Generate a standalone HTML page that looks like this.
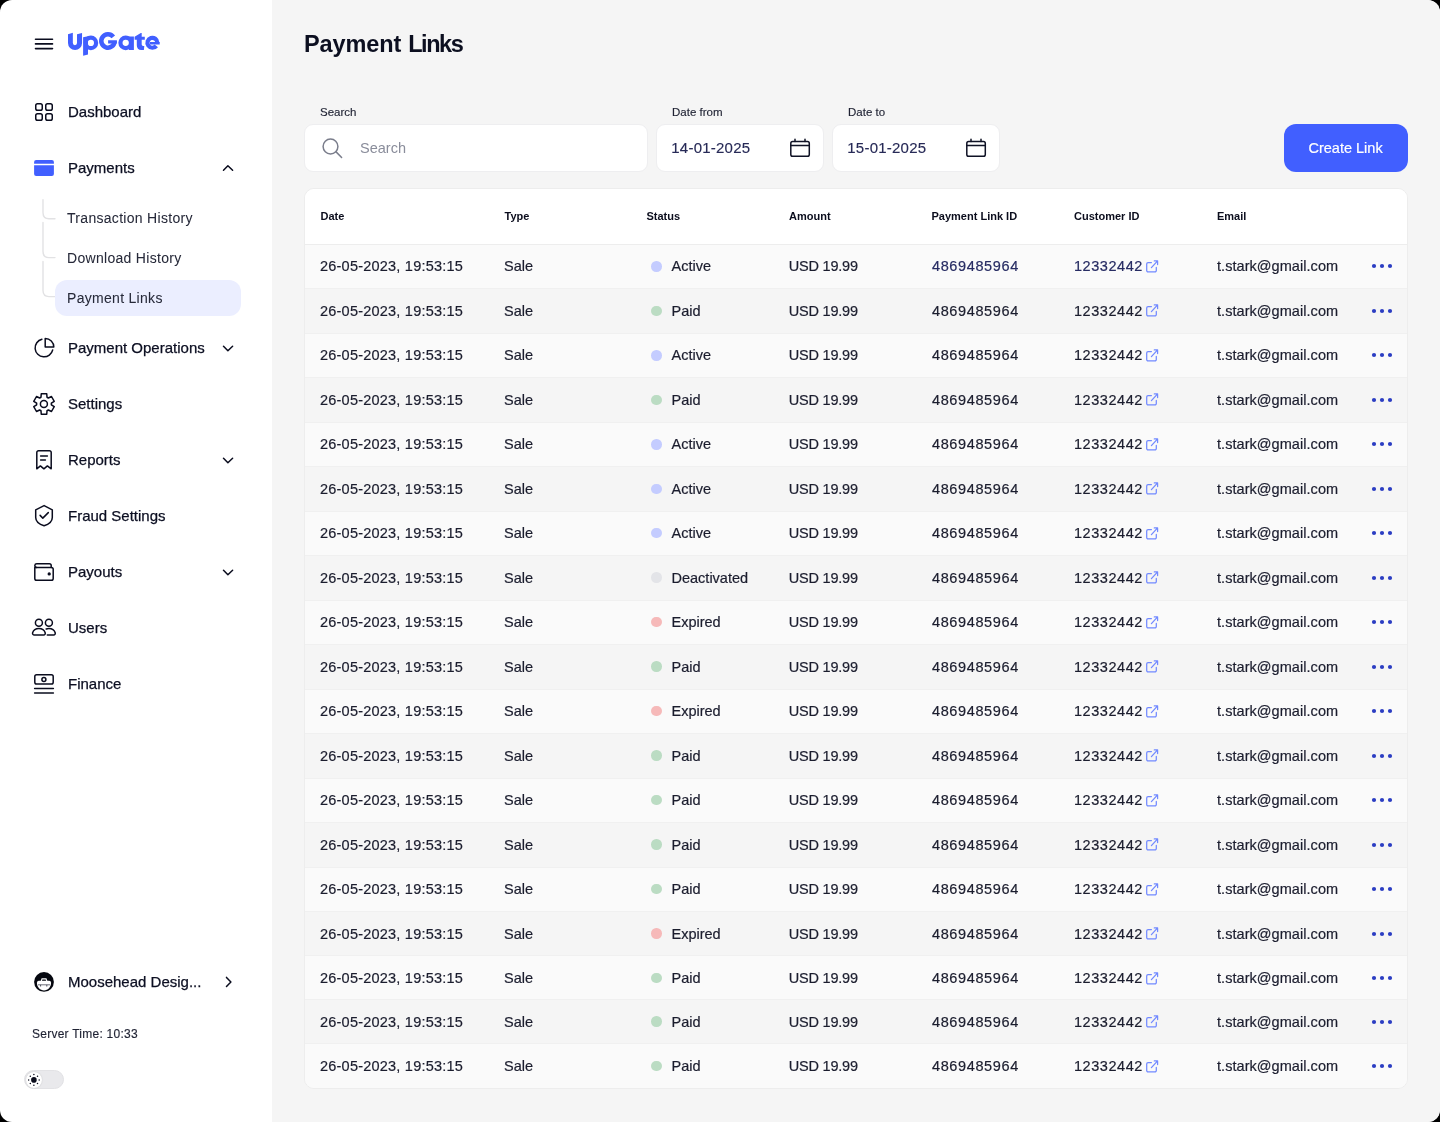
<!DOCTYPE html>
<html><head><meta charset="utf-8">
<style>
*{box-sizing:border-box;margin:0;padding:0}
html,body{width:1440px;height:1122px;overflow:hidden;background:#000;font-family:"Liberation Sans",sans-serif;color:#171a2c}
.app{position:absolute;left:0;top:0;width:1440px;height:1122px;border-radius:12px;overflow:hidden;background:#fff;will-change:transform}
.mainbg{position:absolute;left:272px;top:0;width:1168px;height:1122px;background:#f5f5f5;border-radius:0 12px 12px 0}
.t{position:absolute;white-space:nowrap;line-height:1}
.nav{font-size:15px;color:#0c0f22;-webkit-text-stroke:0.25px #0c0f22}
.sub{font-size:14px;color:#262939;letter-spacing:0.3px;-webkit-text-stroke:0.05px #262939}
.ico{position:absolute;overflow:visible}
.lbl{position:absolute;font-size:11.5px;color:#1f2233;-webkit-text-stroke:0.15px #1f2233;line-height:1;white-space:nowrap}
.inp{position:absolute;background:#fff;border-radius:9px;height:48px;top:124px;border:1px solid #eeeef0}
.btn{position:absolute;left:1284px;top:124px;width:124px;height:48px;border-radius:12px;background:#415fff}
.card{position:absolute;left:304px;top:188px;width:1104px;height:901px;border-radius:10px;background:#fafafa;overflow:hidden;border:1px solid #ededed}
.head{position:absolute;left:0;top:0;width:1102px;height:56px;background:#fff;border-bottom:1px solid #ededed}
.head span{position:absolute;top:21.75px;font-size:11px;font-weight:bold;line-height:1;color:#0b0d1d;white-space:nowrap}
.row{position:absolute;left:0;width:1102px;height:44px;font-size:14.5px;line-height:1;color:#1b1d2e;border-bottom:1px solid #f0f0f0;-webkit-text-stroke:0.2px #1b1d2e}
.row.odd{background:#fafafa}
.row.even{background:#f5f5f5}
.row.h45 span{top:14.8px}
.row.h45 .dot{top:16.7px}
.row.h45 .ext{top:11.5px}
.row.h45 .dots{top:18.8px}
.row span{position:absolute;top:14.4px;white-space:nowrap}
.c1{left:15px;letter-spacing:0.22px}
.c2{left:199px}
.c3{left:366.5px;letter-spacing:0px}
.dot{position:absolute;left:346.2px;top:16.2px;width:10.5px;height:10.5px;border-radius:50%}
.c4{left:483.7px;letter-spacing:-0.2px}
.c5{left:627px;letter-spacing:0.62px}
.c6{left:769px;letter-spacing:0.55px}
.c7{left:912px;letter-spacing:0.05px}
.ext{position:absolute;left:837px;top:11px}
.dots{position:absolute;left:1064px;top:18.3px}
.row.first .c5,.row.first .c6{color:#272c63;-webkit-text-stroke:0.2px #272c63}
</style></head>
<body><div class="app">
<div class="mainbg"></div>
<!-- SIDEBAR -->
<svg class="ico" style="left:0;top:0" width="272" height="1122" viewBox="0 0 272 1122">
 <g fill="none" stroke="#0a0c1e" stroke-width="1.5" stroke-linecap="round" stroke-linejoin="round">
  <!-- hamburger -->
  <path d="M35.5 39.2H52.5M35.5 43.9H52.5M35.5 48.6H52.5" stroke-width="1.6"/>
  <!-- dashboard -->
  <rect x="35.75" y="103.75" width="6.5" height="6.5" rx="1.8"/>
  <rect x="45.75" y="103.75" width="6.5" height="6.5" rx="1.8"/>
  <rect x="35.75" y="113.75" width="6.5" height="6.5" rx="1.8"/>
  <rect x="45.75" y="113.75" width="6.5" height="6.5" rx="1.8"/>
  <!-- chevrons -->
  <path d="M223.5 170.3L227.9 165.8L232.6 170.3"/>
  <path d="M223.5 346.3L227.9 350.8L232.6 346.3"/>
  <path d="M223.5 458.3L227.9 462.8L232.6 458.3"/>
  <path d="M223.5 570.3L227.9 574.8L232.6 570.3"/>
  <path d="M226.5 977.4L230.9 982L226.5 986.5"/>
  <!-- tree lines -->
  <g stroke="#e2e2e4" stroke-width="1.4">
   <path d="M43 199.6V212.7Q43 218.7 49 218.7H55"/>
   <path d="M43 222.5V251.6Q43 257.6 49 257.6H55"/>
   <path d="M43 261.5V290.6Q43 296.6 49 296.6H55"/>
  </g>
  <!-- payment operations: pie -->
  <g transform="translate(28 331)">
   <path d="M13.9 8.3A8.9 8.9 0 1 0 24.7 18.9"/>
   <path d="M17.2 16.1V7.4A8.6 8.6 0 0 1 25.8 16.1Z"/>
  </g>
  <!-- settings gear -->
  <g transform="translate(28 387)">
   <path d="M12.99 10.24 L13.26 6.76 L18.74 6.76 L19.01 10.24 L20.35 11.01 L23.50 9.50 L26.24 14.26 L23.36 16.23 L23.36 17.77 L26.24 19.74 L23.50 24.50 L20.35 22.99 L19.01 23.76 L18.74 27.24 L13.26 27.24 L12.99 23.76 L11.65 22.99 L8.50 24.50 L5.76 19.74 L8.64 17.77 L8.64 16.23 L5.76 14.26 L8.50 9.50 L11.65 11.01Z"/>
   <circle cx="15.9" cy="16.9" r="3.5"/>
  </g>
  <!-- reports receipt -->
  <g transform="translate(28 443)">
   <path d="M8.8 25.8V9.4A1.7 1.7 0 0 1 10.5 7.7H21.5A1.7 1.7 0 0 1 23.2 9.4V25.8L19.4 22.9L15.9 25.8L12.4 22.9Z"/>
   <path d="M12.6 12.9H19.4M12.6 17H17.4"/>
  </g>
  <!-- fraud shield -->
  <g transform="translate(28 499)">
   <path d="M16.1 6.6L7.7 10.8V18.5C7.7 22.2 11.2 25.2 16.1 26.8C21 25.2 24.3 22.2 24.3 18.5V10.8Z"/>
   <path d="M12.1 16.4L14.8 19.1L20.3 13.6"/>
  </g>
  <!-- payouts wallet -->
  <g transform="translate(28 555)">
   <path d="M6.8 12.4V23.4A1.8 1.8 0 0 0 8.6 25.2H23.4A1.8 1.8 0 0 0 25.2 23.4V14.2A1.8 1.8 0 0 0 23.4 12.4H6.8"/>
   <path d="M23.2 12.4V10.6A1.8 1.8 0 0 0 21.4 8.8H8.8A2 2 0 0 0 6.8 10.6A1.8 1.8 0 0 0 8.6 12.4"/>
   <circle cx="21.2" cy="18.9" r="0.9" fill="#0a0c1e"/>
  </g>
  <!-- users -->
  <g transform="translate(28 611)">
   <circle cx="10.9" cy="11.7" r="3.5"/>
   <circle cx="20.9" cy="11.7" r="3.5"/>
   <path d="M6.3 24.1H15.6C16.8 24.1 17.5 23 17.2 21.8C16.4 19.3 13.9 17.6 10.9 17.6C7.9 17.6 5.4 19.3 4.6 21.8C4.3 23 5.1 24.1 6.3 24.1Z"/>
   <path d="M18.2 18.0C19 17.7 19.9 17.6 20.9 17.6C23.9 17.6 26.4 19.3 27.2 21.8C27.5 23 26.8 24.1 25.6 24.1H19.3"/>
  </g>
  <!-- finance -->
  <g transform="translate(28 667)">
   <rect x="6.8" y="7.7" width="18.4" height="9.4" rx="1.8"/>
   <circle cx="15.9" cy="12.4" r="2"/>
   <path d="M6.6 21.5H25.4M6.6 25.9H25.4"/>
  </g>
 </g>
 <!-- payments card icon (filled) -->
 <g fill="#415fff">
  <path d="M34.1 163.8V162A2 2 0 0 1 36.1 160H51.9A2 2 0 0 1 53.9 162V163.8Z"/>
  <path d="M34.1 165.2H53.9V173.9A2 2 0 0 1 51.9 175.9H36.1A2 2 0 0 1 34.1 173.9Z"/>
 </g>
 <!-- avatar -->
 <g transform="translate(28 965)">
  <circle cx="16" cy="16.9" r="9.9" fill="#05070f"/>
  <path d="M8.9 17.5H23.1C23.1 22.2 19.9 25.4 16 25.4C12.1 25.4 8.9 22.2 8.9 17.5Z" fill="#fff"/>
  <rect x="9" y="15.8" width="14" height="3.5" rx="1.7" fill="#fff"/>
  <path d="M12.7 15.9L13.6 13.3H18.4L19.4 15.9H18.2L17.6 14.4H14.4L13.9 15.9Z" fill="#fff"/>
  <path d="M10 19.8H22" stroke="#4a4c5a" stroke-width="0.8"/>
  <path d="M12.6 19.8V21.5M18.8 19.8V21.5" stroke="#4a4c5a" stroke-width="1"/>
 </g>
</svg>

<svg class="ico" style="left:0;top:0" width="200" height="70" viewBox="0 0 200 70">
 <g fill="#415fff">
  <path d="M68 34.25L72.85 32.7V43.1A2.075 2.075 0 0 0 77 43.1V34.25L82.05 32.9V43.02A7.025 7.025 0 0 1 68 43.02Z"/>
  <path d="M83.1 37.2L88 36.2V54.4L83.1 55.8Z"/>
  <path d="M129 36.4H133.9V49.9H129Z"/>
  <path d="M134.6 39.8V36.7L140.8 32.9H141.7V36.7H144.8V39.8H141.7V44.6Q141.7 46.05 143.1 46.05H144.3L143.9 49.9H141.3Q136.8 49.9 136.8 45.2V39.8Z"/>
  <path d="M108.1 40.15H116.9V43.6H108.1Z"/>
  <path d="M149.9 42.1H159.7V44.5H149.9Z"/>
 </g>
 <g fill="none" stroke="#415fff">
  <circle cx="90.9" cy="42.9" r="5.2" stroke-width="4.2"/>
  <circle cx="125.7" cy="42.85" r="5.25" stroke-width="4.2"/>
  <path d="M113.28 36.83A6.7 6.7 0 1 0 114.70 41.18" stroke-width="4.5"/>
  <path d="M157.35 42.80A4.95 4.95 0 1 0 156.31 45.85" stroke-width="4.2"/>
 </g>
</svg>

<div class="t nav" style="left:68px;top:104px">Dashboard</div>
<div class="t nav" style="left:68px;top:160px">Payments</div>
<div class="t sub" style="left:67px;top:211px">Transaction History</div>
<div class="t sub" style="left:67px;top:251px">Download History</div>
<div style="position:absolute;left:55px;top:280px;width:186px;height:36px;border-radius:12px;background:#ebeeff"></div>
<div class="t sub" style="left:67px;top:291px">Payment Links</div>
<div class="t nav" style="left:68px;top:340px">Payment Operations</div>
<div class="t nav" style="left:68px;top:396px">Settings</div>
<div class="t nav" style="left:68px;top:452px">Reports</div>
<div class="t nav" style="left:68px;top:508px">Fraud Settings</div>
<div class="t nav" style="left:68px;top:564px">Payouts</div>
<div class="t nav" style="left:68px;top:620px">Users</div>
<div class="t nav" style="left:68px;top:676px">Finance</div>

<div class="t nav" style="left:68px;top:974px">Moosehead Desig...</div>
<div class="t" style="left:32px;top:1028px;font-size:12px;color:#1f2233;letter-spacing:0.25px;-webkit-text-stroke:0.15px #1f2233">Server Time: 10:33</div>
<div style="position:absolute;left:24.3px;top:1070.3px;width:39.4px;height:19.2px;border-radius:10px;background:#e9e9ec;border:1px solid #e2e2e5"></div>
<div style="position:absolute;left:25.9px;top:1071.9px;width:16px;height:16px;border-radius:8px;background:#fff;box-shadow:0 0 1.5px rgba(0,0,0,.18)"></div>
<svg class="ico" style="left:0;top:0" width="100" height="1122" viewBox="0 0 100 1122">
 <g transform="translate(33.9 1079.9)" fill="#0b0d1c">
  <circle r="2.8"/>
  <circle cx="0" cy="-5.3" r="0.75"/><circle cx="0" cy="5.3" r="0.75"/>
  <circle cx="-5.3" cy="0" r="0.75"/><circle cx="5.3" cy="0" r="0.75"/>
  <circle cx="-3.6" cy="-3.6" r="0.75"/><circle cx="3.6" cy="-3.6" r="0.75"/>
  <circle cx="-3.6" cy="3.6" r="0.75"/><circle cx="3.6" cy="3.6" r="0.75"/>
 </g>
</svg>

<!-- MAIN -->
<div class="t" style="left:304px;top:33px;font-size:23.5px;font-weight:bold;color:#0c0f20;letter-spacing:-0.1px">Payment</div>
<div class="t" style="left:408.2px;top:33px;font-size:23.5px;font-weight:bold;color:#0c0f20;letter-spacing:-1.45px">Links</div>
<div class="lbl" style="left:320px;top:106.5px">Search</div>
<div class="lbl" style="left:672px;top:106.5px">Date from</div>
<div class="lbl" style="left:848px;top:106.5px">Date to</div>
<div class="inp" style="left:304px;width:344px"></div>
<div class="inp" style="left:656px;width:168px"></div>
<div class="inp" style="left:832px;width:168px"></div>
<svg class="ico" style="left:300px;top:120px" width="720" height="60" viewBox="300 120 720 60">
 <g fill="none" stroke="#7a7d8b" stroke-width="1.5" stroke-linecap="round">
  <circle cx="330.5" cy="146.5" r="7.4"/>
  <path d="M336.1 151.9L341.6 157.5"/>
 </g>
 <g fill="none" stroke="#0f1225" stroke-width="1.5" stroke-linecap="round" stroke-linejoin="round">
  <rect x="790.8" y="141.6" width="18.5" height="14.6" rx="1.8"/>
  <path d="M790.8 145.5H809.3M795 139.2V141.6M805 139.2V141.6"/>
  <rect x="966.8" y="141.6" width="18.5" height="14.6" rx="1.8"/>
  <path d="M966.8 145.5H985.3M971 139.2V141.6M981 139.2V141.6"/>
 </g>
</svg>
<div class="t" style="left:360px;top:141px;font-size:14.5px;color:#8a8d9b">Search</div>
<div class="t" style="left:671.3px;top:139.5px;font-size:15px;color:#272a57;letter-spacing:0.23px;-webkit-text-stroke:0.15px #272a57">14-01-2025</div>
<div class="t" style="left:847.3px;top:139.5px;font-size:15px;color:#272a57;letter-spacing:0.23px;-webkit-text-stroke:0.15px #272a57">15-01-2025</div>
<div class="btn"></div>
<div class="t" style="left:1308.5px;top:141px;font-size:14.5px;color:#fff;-webkit-text-stroke:0.2px #fff">Create Link</div>

<div class="card"><div class="head">
<span style="left:15.5px">Date</span><span style="left:199.5px">Type</span><span style="left:341.5px">Status</span><span style="left:484px">Amount</span><span style="left:626.5px">Payment Link ID</span><span style="left:769px">Customer ID</span><span style="left:912px">Email</span>
</div>
<div class="row odd first" style="top:56px;height:44px"><span class="c1" style="top:14.35px">26-05-2023, 19:53:15</span><span class="c2" style="top:14.35px">Sale</span><i class="dot" style="top:16.10px;background:#c4ccff"></i><span class="c3" style="top:14.35px">Active</span><span class="c4" style="top:14.35px">USD 19.99</span><span class="c5" style="top:14.35px">4869485964</span><span class="c6" style="top:14.35px">12332442</span><svg class="ext" style="top:11.00px" width="20" height="20" viewBox="0 0 20 20"><path d="M9.4 6.5H6.1A1.4 1.4 0 0 0 4.7 7.9V14.5A1.4 1.4 0 0 0 6.1 15.9H12.9A1.4 1.4 0 0 0 14.3 14.5V11.4M12.3 4.9H15.6V8.6M15.6 4.9L9.4 11.6" fill="none" stroke="#7189ff" stroke-width="1.25" stroke-linecap="round" stroke-linejoin="round"/></svg><span class="c7" style="top:14.35px">t.stark@gmail.com</span><svg class="dots" style="top:18.35px" width="26" height="6" viewBox="0 0 26 6"><circle cx="5" cy="3" r="2.1" fill="#2b3dc2"/><circle cx="13" cy="3" r="2.1" fill="#2b3dc2"/><circle cx="21" cy="3" r="2.1" fill="#2b3dc2"/></svg></div>
<div class="row even" style="top:100px;height:45px"><span class="c1" style="top:14.83px">26-05-2023, 19:53:15</span><span class="c2" style="top:14.83px">Sale</span><i class="dot" style="top:16.58px;background:#bbdcc3"></i><span class="c3" style="top:14.83px">Paid</span><span class="c4" style="top:14.83px">USD 19.99</span><span class="c5" style="top:14.83px">4869485964</span><span class="c6" style="top:14.83px">12332442</span><svg class="ext" style="top:11.48px" width="20" height="20" viewBox="0 0 20 20"><path d="M9.4 6.5H6.1A1.4 1.4 0 0 0 4.7 7.9V14.5A1.4 1.4 0 0 0 6.1 15.9H12.9A1.4 1.4 0 0 0 14.3 14.5V11.4M12.3 4.9H15.6V8.6M15.6 4.9L9.4 11.6" fill="none" stroke="#7189ff" stroke-width="1.25" stroke-linecap="round" stroke-linejoin="round"/></svg><span class="c7" style="top:14.83px">t.stark@gmail.com</span><svg class="dots" style="top:18.83px" width="26" height="6" viewBox="0 0 26 6"><circle cx="5" cy="3" r="2.1" fill="#2b3dc2"/><circle cx="13" cy="3" r="2.1" fill="#2b3dc2"/><circle cx="21" cy="3" r="2.1" fill="#2b3dc2"/></svg></div>
<div class="row odd" style="top:145px;height:44px"><span class="c1" style="top:14.31px">26-05-2023, 19:53:15</span><span class="c2" style="top:14.31px">Sale</span><i class="dot" style="top:16.06px;background:#c4ccff"></i><span class="c3" style="top:14.31px">Active</span><span class="c4" style="top:14.31px">USD 19.99</span><span class="c5" style="top:14.31px">4869485964</span><span class="c6" style="top:14.31px">12332442</span><svg class="ext" style="top:10.96px" width="20" height="20" viewBox="0 0 20 20"><path d="M9.4 6.5H6.1A1.4 1.4 0 0 0 4.7 7.9V14.5A1.4 1.4 0 0 0 6.1 15.9H12.9A1.4 1.4 0 0 0 14.3 14.5V11.4M12.3 4.9H15.6V8.6M15.6 4.9L9.4 11.6" fill="none" stroke="#7189ff" stroke-width="1.25" stroke-linecap="round" stroke-linejoin="round"/></svg><span class="c7" style="top:14.31px">t.stark@gmail.com</span><svg class="dots" style="top:18.31px" width="26" height="6" viewBox="0 0 26 6"><circle cx="5" cy="3" r="2.1" fill="#2b3dc2"/><circle cx="13" cy="3" r="2.1" fill="#2b3dc2"/><circle cx="21" cy="3" r="2.1" fill="#2b3dc2"/></svg></div>
<div class="row even" style="top:189px;height:45px"><span class="c1" style="top:14.79px">26-05-2023, 19:53:15</span><span class="c2" style="top:14.79px">Sale</span><i class="dot" style="top:16.54px;background:#bbdcc3"></i><span class="c3" style="top:14.79px">Paid</span><span class="c4" style="top:14.79px">USD 19.99</span><span class="c5" style="top:14.79px">4869485964</span><span class="c6" style="top:14.79px">12332442</span><svg class="ext" style="top:11.44px" width="20" height="20" viewBox="0 0 20 20"><path d="M9.4 6.5H6.1A1.4 1.4 0 0 0 4.7 7.9V14.5A1.4 1.4 0 0 0 6.1 15.9H12.9A1.4 1.4 0 0 0 14.3 14.5V11.4M12.3 4.9H15.6V8.6M15.6 4.9L9.4 11.6" fill="none" stroke="#7189ff" stroke-width="1.25" stroke-linecap="round" stroke-linejoin="round"/></svg><span class="c7" style="top:14.79px">t.stark@gmail.com</span><svg class="dots" style="top:18.79px" width="26" height="6" viewBox="0 0 26 6"><circle cx="5" cy="3" r="2.1" fill="#2b3dc2"/><circle cx="13" cy="3" r="2.1" fill="#2b3dc2"/><circle cx="21" cy="3" r="2.1" fill="#2b3dc2"/></svg></div>
<div class="row odd" style="top:234px;height:44px"><span class="c1" style="top:14.27px">26-05-2023, 19:53:15</span><span class="c2" style="top:14.27px">Sale</span><i class="dot" style="top:16.02px;background:#c4ccff"></i><span class="c3" style="top:14.27px">Active</span><span class="c4" style="top:14.27px">USD 19.99</span><span class="c5" style="top:14.27px">4869485964</span><span class="c6" style="top:14.27px">12332442</span><svg class="ext" style="top:10.92px" width="20" height="20" viewBox="0 0 20 20"><path d="M9.4 6.5H6.1A1.4 1.4 0 0 0 4.7 7.9V14.5A1.4 1.4 0 0 0 6.1 15.9H12.9A1.4 1.4 0 0 0 14.3 14.5V11.4M12.3 4.9H15.6V8.6M15.6 4.9L9.4 11.6" fill="none" stroke="#7189ff" stroke-width="1.25" stroke-linecap="round" stroke-linejoin="round"/></svg><span class="c7" style="top:14.27px">t.stark@gmail.com</span><svg class="dots" style="top:18.27px" width="26" height="6" viewBox="0 0 26 6"><circle cx="5" cy="3" r="2.1" fill="#2b3dc2"/><circle cx="13" cy="3" r="2.1" fill="#2b3dc2"/><circle cx="21" cy="3" r="2.1" fill="#2b3dc2"/></svg></div>
<div class="row even" style="top:278px;height:45px"><span class="c1" style="top:14.75px">26-05-2023, 19:53:15</span><span class="c2" style="top:14.75px">Sale</span><i class="dot" style="top:16.50px;background:#c4ccff"></i><span class="c3" style="top:14.75px">Active</span><span class="c4" style="top:14.75px">USD 19.99</span><span class="c5" style="top:14.75px">4869485964</span><span class="c6" style="top:14.75px">12332442</span><svg class="ext" style="top:11.40px" width="20" height="20" viewBox="0 0 20 20"><path d="M9.4 6.5H6.1A1.4 1.4 0 0 0 4.7 7.9V14.5A1.4 1.4 0 0 0 6.1 15.9H12.9A1.4 1.4 0 0 0 14.3 14.5V11.4M12.3 4.9H15.6V8.6M15.6 4.9L9.4 11.6" fill="none" stroke="#7189ff" stroke-width="1.25" stroke-linecap="round" stroke-linejoin="round"/></svg><span class="c7" style="top:14.75px">t.stark@gmail.com</span><svg class="dots" style="top:18.75px" width="26" height="6" viewBox="0 0 26 6"><circle cx="5" cy="3" r="2.1" fill="#2b3dc2"/><circle cx="13" cy="3" r="2.1" fill="#2b3dc2"/><circle cx="21" cy="3" r="2.1" fill="#2b3dc2"/></svg></div>
<div class="row odd" style="top:323px;height:44px"><span class="c1" style="top:14.23px">26-05-2023, 19:53:15</span><span class="c2" style="top:14.23px">Sale</span><i class="dot" style="top:15.98px;background:#c4ccff"></i><span class="c3" style="top:14.23px">Active</span><span class="c4" style="top:14.23px">USD 19.99</span><span class="c5" style="top:14.23px">4869485964</span><span class="c6" style="top:14.23px">12332442</span><svg class="ext" style="top:10.88px" width="20" height="20" viewBox="0 0 20 20"><path d="M9.4 6.5H6.1A1.4 1.4 0 0 0 4.7 7.9V14.5A1.4 1.4 0 0 0 6.1 15.9H12.9A1.4 1.4 0 0 0 14.3 14.5V11.4M12.3 4.9H15.6V8.6M15.6 4.9L9.4 11.6" fill="none" stroke="#7189ff" stroke-width="1.25" stroke-linecap="round" stroke-linejoin="round"/></svg><span class="c7" style="top:14.23px">t.stark@gmail.com</span><svg class="dots" style="top:18.23px" width="26" height="6" viewBox="0 0 26 6"><circle cx="5" cy="3" r="2.1" fill="#2b3dc2"/><circle cx="13" cy="3" r="2.1" fill="#2b3dc2"/><circle cx="21" cy="3" r="2.1" fill="#2b3dc2"/></svg></div>
<div class="row even" style="top:367px;height:45px"><span class="c1" style="top:14.71px">26-05-2023, 19:53:15</span><span class="c2" style="top:14.71px">Sale</span><i class="dot" style="top:16.46px;background:#e3e4e8"></i><span class="c3" style="top:14.71px">Deactivated</span><span class="c4" style="top:14.71px">USD 19.99</span><span class="c5" style="top:14.71px">4869485964</span><span class="c6" style="top:14.71px">12332442</span><svg class="ext" style="top:11.36px" width="20" height="20" viewBox="0 0 20 20"><path d="M9.4 6.5H6.1A1.4 1.4 0 0 0 4.7 7.9V14.5A1.4 1.4 0 0 0 6.1 15.9H12.9A1.4 1.4 0 0 0 14.3 14.5V11.4M12.3 4.9H15.6V8.6M15.6 4.9L9.4 11.6" fill="none" stroke="#7189ff" stroke-width="1.25" stroke-linecap="round" stroke-linejoin="round"/></svg><span class="c7" style="top:14.71px">t.stark@gmail.com</span><svg class="dots" style="top:18.71px" width="26" height="6" viewBox="0 0 26 6"><circle cx="5" cy="3" r="2.1" fill="#2b3dc2"/><circle cx="13" cy="3" r="2.1" fill="#2b3dc2"/><circle cx="21" cy="3" r="2.1" fill="#2b3dc2"/></svg></div>
<div class="row odd" style="top:412px;height:44px"><span class="c1" style="top:14.19px">26-05-2023, 19:53:15</span><span class="c2" style="top:14.19px">Sale</span><i class="dot" style="top:15.94px;background:#f6b9b9"></i><span class="c3" style="top:14.19px">Expired</span><span class="c4" style="top:14.19px">USD 19.99</span><span class="c5" style="top:14.19px">4869485964</span><span class="c6" style="top:14.19px">12332442</span><svg class="ext" style="top:10.84px" width="20" height="20" viewBox="0 0 20 20"><path d="M9.4 6.5H6.1A1.4 1.4 0 0 0 4.7 7.9V14.5A1.4 1.4 0 0 0 6.1 15.9H12.9A1.4 1.4 0 0 0 14.3 14.5V11.4M12.3 4.9H15.6V8.6M15.6 4.9L9.4 11.6" fill="none" stroke="#7189ff" stroke-width="1.25" stroke-linecap="round" stroke-linejoin="round"/></svg><span class="c7" style="top:14.19px">t.stark@gmail.com</span><svg class="dots" style="top:18.19px" width="26" height="6" viewBox="0 0 26 6"><circle cx="5" cy="3" r="2.1" fill="#2b3dc2"/><circle cx="13" cy="3" r="2.1" fill="#2b3dc2"/><circle cx="21" cy="3" r="2.1" fill="#2b3dc2"/></svg></div>
<div class="row even" style="top:456px;height:45px"><span class="c1" style="top:14.67px">26-05-2023, 19:53:15</span><span class="c2" style="top:14.67px">Sale</span><i class="dot" style="top:16.42px;background:#bbdcc3"></i><span class="c3" style="top:14.67px">Paid</span><span class="c4" style="top:14.67px">USD 19.99</span><span class="c5" style="top:14.67px">4869485964</span><span class="c6" style="top:14.67px">12332442</span><svg class="ext" style="top:11.32px" width="20" height="20" viewBox="0 0 20 20"><path d="M9.4 6.5H6.1A1.4 1.4 0 0 0 4.7 7.9V14.5A1.4 1.4 0 0 0 6.1 15.9H12.9A1.4 1.4 0 0 0 14.3 14.5V11.4M12.3 4.9H15.6V8.6M15.6 4.9L9.4 11.6" fill="none" stroke="#7189ff" stroke-width="1.25" stroke-linecap="round" stroke-linejoin="round"/></svg><span class="c7" style="top:14.67px">t.stark@gmail.com</span><svg class="dots" style="top:18.67px" width="26" height="6" viewBox="0 0 26 6"><circle cx="5" cy="3" r="2.1" fill="#2b3dc2"/><circle cx="13" cy="3" r="2.1" fill="#2b3dc2"/><circle cx="21" cy="3" r="2.1" fill="#2b3dc2"/></svg></div>
<div class="row odd" style="top:501px;height:44px"><span class="c1" style="top:14.15px">26-05-2023, 19:53:15</span><span class="c2" style="top:14.15px">Sale</span><i class="dot" style="top:15.90px;background:#f6b9b9"></i><span class="c3" style="top:14.15px">Expired</span><span class="c4" style="top:14.15px">USD 19.99</span><span class="c5" style="top:14.15px">4869485964</span><span class="c6" style="top:14.15px">12332442</span><svg class="ext" style="top:10.80px" width="20" height="20" viewBox="0 0 20 20"><path d="M9.4 6.5H6.1A1.4 1.4 0 0 0 4.7 7.9V14.5A1.4 1.4 0 0 0 6.1 15.9H12.9A1.4 1.4 0 0 0 14.3 14.5V11.4M12.3 4.9H15.6V8.6M15.6 4.9L9.4 11.6" fill="none" stroke="#7189ff" stroke-width="1.25" stroke-linecap="round" stroke-linejoin="round"/></svg><span class="c7" style="top:14.15px">t.stark@gmail.com</span><svg class="dots" style="top:18.15px" width="26" height="6" viewBox="0 0 26 6"><circle cx="5" cy="3" r="2.1" fill="#2b3dc2"/><circle cx="13" cy="3" r="2.1" fill="#2b3dc2"/><circle cx="21" cy="3" r="2.1" fill="#2b3dc2"/></svg></div>
<div class="row even" style="top:545px;height:45px"><span class="c1" style="top:14.63px">26-05-2023, 19:53:15</span><span class="c2" style="top:14.63px">Sale</span><i class="dot" style="top:16.38px;background:#bbdcc3"></i><span class="c3" style="top:14.63px">Paid</span><span class="c4" style="top:14.63px">USD 19.99</span><span class="c5" style="top:14.63px">4869485964</span><span class="c6" style="top:14.63px">12332442</span><svg class="ext" style="top:11.28px" width="20" height="20" viewBox="0 0 20 20"><path d="M9.4 6.5H6.1A1.4 1.4 0 0 0 4.7 7.9V14.5A1.4 1.4 0 0 0 6.1 15.9H12.9A1.4 1.4 0 0 0 14.3 14.5V11.4M12.3 4.9H15.6V8.6M15.6 4.9L9.4 11.6" fill="none" stroke="#7189ff" stroke-width="1.25" stroke-linecap="round" stroke-linejoin="round"/></svg><span class="c7" style="top:14.63px">t.stark@gmail.com</span><svg class="dots" style="top:18.63px" width="26" height="6" viewBox="0 0 26 6"><circle cx="5" cy="3" r="2.1" fill="#2b3dc2"/><circle cx="13" cy="3" r="2.1" fill="#2b3dc2"/><circle cx="21" cy="3" r="2.1" fill="#2b3dc2"/></svg></div>
<div class="row odd" style="top:590px;height:44px"><span class="c1" style="top:14.11px">26-05-2023, 19:53:15</span><span class="c2" style="top:14.11px">Sale</span><i class="dot" style="top:15.86px;background:#bbdcc3"></i><span class="c3" style="top:14.11px">Paid</span><span class="c4" style="top:14.11px">USD 19.99</span><span class="c5" style="top:14.11px">4869485964</span><span class="c6" style="top:14.11px">12332442</span><svg class="ext" style="top:10.76px" width="20" height="20" viewBox="0 0 20 20"><path d="M9.4 6.5H6.1A1.4 1.4 0 0 0 4.7 7.9V14.5A1.4 1.4 0 0 0 6.1 15.9H12.9A1.4 1.4 0 0 0 14.3 14.5V11.4M12.3 4.9H15.6V8.6M15.6 4.9L9.4 11.6" fill="none" stroke="#7189ff" stroke-width="1.25" stroke-linecap="round" stroke-linejoin="round"/></svg><span class="c7" style="top:14.11px">t.stark@gmail.com</span><svg class="dots" style="top:18.11px" width="26" height="6" viewBox="0 0 26 6"><circle cx="5" cy="3" r="2.1" fill="#2b3dc2"/><circle cx="13" cy="3" r="2.1" fill="#2b3dc2"/><circle cx="21" cy="3" r="2.1" fill="#2b3dc2"/></svg></div>
<div class="row even" style="top:634px;height:45px"><span class="c1" style="top:14.59px">26-05-2023, 19:53:15</span><span class="c2" style="top:14.59px">Sale</span><i class="dot" style="top:16.34px;background:#bbdcc3"></i><span class="c3" style="top:14.59px">Paid</span><span class="c4" style="top:14.59px">USD 19.99</span><span class="c5" style="top:14.59px">4869485964</span><span class="c6" style="top:14.59px">12332442</span><svg class="ext" style="top:11.24px" width="20" height="20" viewBox="0 0 20 20"><path d="M9.4 6.5H6.1A1.4 1.4 0 0 0 4.7 7.9V14.5A1.4 1.4 0 0 0 6.1 15.9H12.9A1.4 1.4 0 0 0 14.3 14.5V11.4M12.3 4.9H15.6V8.6M15.6 4.9L9.4 11.6" fill="none" stroke="#7189ff" stroke-width="1.25" stroke-linecap="round" stroke-linejoin="round"/></svg><span class="c7" style="top:14.59px">t.stark@gmail.com</span><svg class="dots" style="top:18.59px" width="26" height="6" viewBox="0 0 26 6"><circle cx="5" cy="3" r="2.1" fill="#2b3dc2"/><circle cx="13" cy="3" r="2.1" fill="#2b3dc2"/><circle cx="21" cy="3" r="2.1" fill="#2b3dc2"/></svg></div>
<div class="row odd" style="top:679px;height:44px"><span class="c1" style="top:14.07px">26-05-2023, 19:53:15</span><span class="c2" style="top:14.07px">Sale</span><i class="dot" style="top:15.82px;background:#bbdcc3"></i><span class="c3" style="top:14.07px">Paid</span><span class="c4" style="top:14.07px">USD 19.99</span><span class="c5" style="top:14.07px">4869485964</span><span class="c6" style="top:14.07px">12332442</span><svg class="ext" style="top:10.72px" width="20" height="20" viewBox="0 0 20 20"><path d="M9.4 6.5H6.1A1.4 1.4 0 0 0 4.7 7.9V14.5A1.4 1.4 0 0 0 6.1 15.9H12.9A1.4 1.4 0 0 0 14.3 14.5V11.4M12.3 4.9H15.6V8.6M15.6 4.9L9.4 11.6" fill="none" stroke="#7189ff" stroke-width="1.25" stroke-linecap="round" stroke-linejoin="round"/></svg><span class="c7" style="top:14.07px">t.stark@gmail.com</span><svg class="dots" style="top:18.07px" width="26" height="6" viewBox="0 0 26 6"><circle cx="5" cy="3" r="2.1" fill="#2b3dc2"/><circle cx="13" cy="3" r="2.1" fill="#2b3dc2"/><circle cx="21" cy="3" r="2.1" fill="#2b3dc2"/></svg></div>
<div class="row even" style="top:723px;height:44px"><span class="c1" style="top:14.55px">26-05-2023, 19:53:15</span><span class="c2" style="top:14.55px">Sale</span><i class="dot" style="top:16.30px;background:#f6b9b9"></i><span class="c3" style="top:14.55px">Expired</span><span class="c4" style="top:14.55px">USD 19.99</span><span class="c5" style="top:14.55px">4869485964</span><span class="c6" style="top:14.55px">12332442</span><svg class="ext" style="top:11.20px" width="20" height="20" viewBox="0 0 20 20"><path d="M9.4 6.5H6.1A1.4 1.4 0 0 0 4.7 7.9V14.5A1.4 1.4 0 0 0 6.1 15.9H12.9A1.4 1.4 0 0 0 14.3 14.5V11.4M12.3 4.9H15.6V8.6M15.6 4.9L9.4 11.6" fill="none" stroke="#7189ff" stroke-width="1.25" stroke-linecap="round" stroke-linejoin="round"/></svg><span class="c7" style="top:14.55px">t.stark@gmail.com</span><svg class="dots" style="top:18.55px" width="26" height="6" viewBox="0 0 26 6"><circle cx="5" cy="3" r="2.1" fill="#2b3dc2"/><circle cx="13" cy="3" r="2.1" fill="#2b3dc2"/><circle cx="21" cy="3" r="2.1" fill="#2b3dc2"/></svg></div>
<div class="row odd" style="top:767px;height:44px"><span class="c1" style="top:15.03px">26-05-2023, 19:53:15</span><span class="c2" style="top:15.03px">Sale</span><i class="dot" style="top:16.78px;background:#bbdcc3"></i><span class="c3" style="top:15.03px">Paid</span><span class="c4" style="top:15.03px">USD 19.99</span><span class="c5" style="top:15.03px">4869485964</span><span class="c6" style="top:15.03px">12332442</span><svg class="ext" style="top:11.68px" width="20" height="20" viewBox="0 0 20 20"><path d="M9.4 6.5H6.1A1.4 1.4 0 0 0 4.7 7.9V14.5A1.4 1.4 0 0 0 6.1 15.9H12.9A1.4 1.4 0 0 0 14.3 14.5V11.4M12.3 4.9H15.6V8.6M15.6 4.9L9.4 11.6" fill="none" stroke="#7189ff" stroke-width="1.25" stroke-linecap="round" stroke-linejoin="round"/></svg><span class="c7" style="top:15.03px">t.stark@gmail.com</span><svg class="dots" style="top:19.03px" width="26" height="6" viewBox="0 0 26 6"><circle cx="5" cy="3" r="2.1" fill="#2b3dc2"/><circle cx="13" cy="3" r="2.1" fill="#2b3dc2"/><circle cx="21" cy="3" r="2.1" fill="#2b3dc2"/></svg></div>
<div class="row even" style="top:811px;height:44px"><span class="c1" style="top:14.70px">26-05-2023, 19:53:15</span><span class="c2" style="top:14.70px">Sale</span><i class="dot" style="top:16.45px;background:#bbdcc3"></i><span class="c3" style="top:14.70px">Paid</span><span class="c4" style="top:14.70px">USD 19.99</span><span class="c5" style="top:14.70px">4869485964</span><span class="c6" style="top:14.70px">12332442</span><svg class="ext" style="top:11.35px" width="20" height="20" viewBox="0 0 20 20"><path d="M9.4 6.5H6.1A1.4 1.4 0 0 0 4.7 7.9V14.5A1.4 1.4 0 0 0 6.1 15.9H12.9A1.4 1.4 0 0 0 14.3 14.5V11.4M12.3 4.9H15.6V8.6M15.6 4.9L9.4 11.6" fill="none" stroke="#7189ff" stroke-width="1.25" stroke-linecap="round" stroke-linejoin="round"/></svg><span class="c7" style="top:14.70px">t.stark@gmail.com</span><svg class="dots" style="top:18.70px" width="26" height="6" viewBox="0 0 26 6"><circle cx="5" cy="3" r="2.1" fill="#2b3dc2"/><circle cx="13" cy="3" r="2.1" fill="#2b3dc2"/><circle cx="21" cy="3" r="2.1" fill="#2b3dc2"/></svg></div>
<div class="row odd" style="top:855px;height:45px"><span class="c1" style="top:15.00px">26-05-2023, 19:53:15</span><span class="c2" style="top:15.00px">Sale</span><i class="dot" style="top:16.75px;background:#bbdcc3"></i><span class="c3" style="top:15.00px">Paid</span><span class="c4" style="top:15.00px">USD 19.99</span><span class="c5" style="top:15.00px">4869485964</span><span class="c6" style="top:15.00px">12332442</span><svg class="ext" style="top:11.65px" width="20" height="20" viewBox="0 0 20 20"><path d="M9.4 6.5H6.1A1.4 1.4 0 0 0 4.7 7.9V14.5A1.4 1.4 0 0 0 6.1 15.9H12.9A1.4 1.4 0 0 0 14.3 14.5V11.4M12.3 4.9H15.6V8.6M15.6 4.9L9.4 11.6" fill="none" stroke="#7189ff" stroke-width="1.25" stroke-linecap="round" stroke-linejoin="round"/></svg><span class="c7" style="top:15.00px">t.stark@gmail.com</span><svg class="dots" style="top:19.00px" width="26" height="6" viewBox="0 0 26 6"><circle cx="5" cy="3" r="2.1" fill="#2b3dc2"/><circle cx="13" cy="3" r="2.1" fill="#2b3dc2"/><circle cx="21" cy="3" r="2.1" fill="#2b3dc2"/></svg></div>
</div>
</div></body></html>
